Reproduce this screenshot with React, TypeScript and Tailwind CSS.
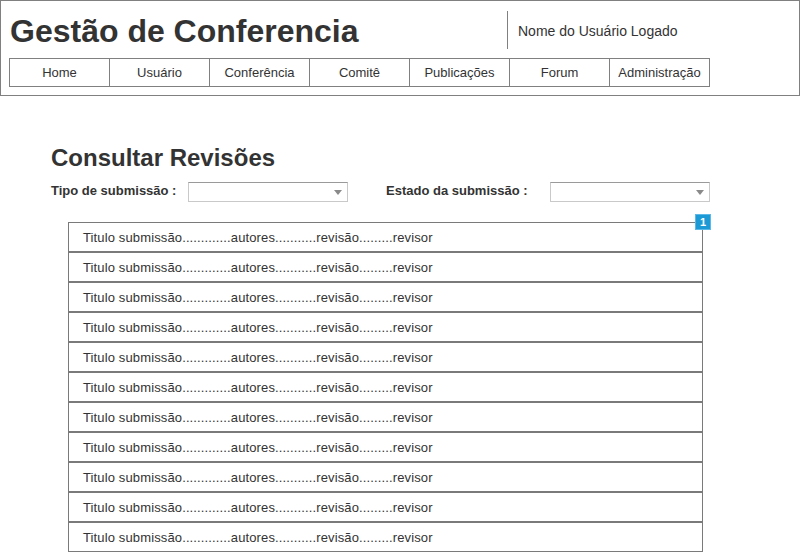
import React from "react";

const navItems = ["Home", "Usuário", "Conferência", "Comitê", "Publicações", "Forum", "Administração"];

function Select() {
  return (
    <div className="relative w-[160px] h-[20px] border border-[#c9c9c9] border-t-[#9a9a9a] bg-white">
      <div className="absolute right-[5px] top-[7px] w-0 h-0 border-l-[4px] border-r-[4px] border-t-[5px] border-l-transparent border-r-transparent border-t-[#8a8a8a]" />
    </div>
  );
}

export default function App() {
  const rows = Array.from({ length: 11 });
  return (
    <div className="w-[800px] h-[552px] overflow-hidden bg-white text-[#333] font-['Liberation_Sans',Arial,sans-serif]">
      <header className="h-[96px] border border-[#808080] flex flex-col">
        <div className="h-[57px] flex pl-[9px]">
          <div className="w-[497px] pt-[14px]">
            <h1 className="text-[32px] leading-[32px] font-bold text-[#333]">Gestão de Conferencia</h1>
          </div>
          <div className="mt-[10px] h-[38px] border-l border-[#808080] pl-[10px]">
            <div className="mt-[12px] text-[14px] leading-[16px]">Nome do Usuário Logado</div>
          </div>
        </div>
        <nav className="ml-[8px] flex h-[29px] w-[701px] border-t border-b border-l border-[#808080]">
          {navItems.map((n) => (
            <div key={n} className="w-[100px] border-r border-[#808080] flex items-center justify-center pt-[1px] text-[13px] leading-[16px]">
              {n}
            </div>
          ))}
        </nav>
      </header>
      <main className="pl-[51px]">
        <h2 className="mt-[48px] text-[24px] leading-[28px] font-bold text-[#333]">Consultar Revisões</h2>
        <div className="mt-[10px] flex items-start">
          <div className="w-[137px] text-[13px] leading-[16px] font-bold pt-[1px]">Tipo de submissão :</div>
          <Select />
          <div className="ml-[38px] w-[164px] text-[13px] leading-[16px] font-bold pt-[1px]">Estado da submissão :</div>
          <Select />
        </div>
        <div className="relative ml-[17px] mt-[20px] w-[635px]">
          {rows.map((_, i) => (
            <div key={i} className="h-[30px] border border-[#7a7a7a] pl-[14px] pt-[1px] flex items-center text-[13px] leading-[16px] tracking-[0.13px]">
              Titulo submissão.............autores...........revisão.........revisor
            </div>
          ))}
          <div className="absolute right-[-8px] top-[-8px] w-[16px] h-[16px] bg-[#1b9ad6] border border-[#5cb8e6] flex items-center justify-center text-white text-[11px] leading-none font-bold">
            1
          </div>
        </div>
      </main>
    </div>
  );
}
